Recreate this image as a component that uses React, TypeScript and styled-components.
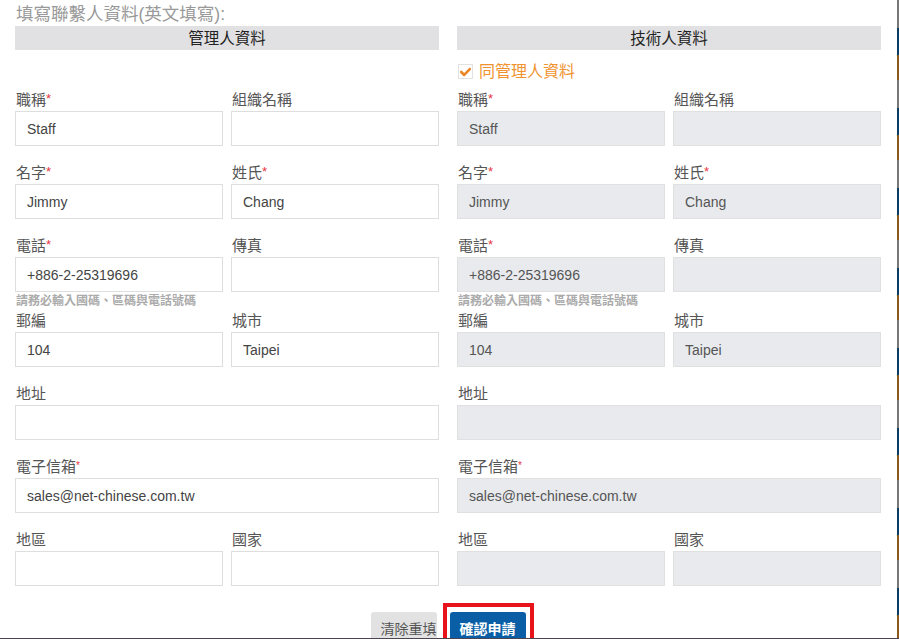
import styled, { createGlobalStyle } from "styled-components";

const GlobalStyle = createGlobalStyle`
    html, body {
        margin: 0;
        padding: 0;
        width: 899px;
        height: 639px;
        overflow: hidden;
        background: #4a4550;
    }
    * { box-sizing: border-box; }
`

type Field = {
    label: string;
    required?: boolean;
    smallStar?: boolean;
    value?: string;
    hint?: string;
}

const rows: Field[][] = [
    [{ label: "職稱", required: true, value: "Staff" }, { label: "組織名稱" }],
    [{ label: "名字", required: true, value: "Jimmy" }, { label: "姓氏", required: true, value: "Chang" }],
    [{ label: "電話", required: true, value: "+886-2-25319696", hint: "請務必輸入國碼、區碼與電話號碼" }, { label: "傳真" }],
    [{ label: "郵編", value: "104" }, { label: "城市", value: "Taipei" }],
    [{ label: "地址" }],
    [{ label: "電子信箱", smallStar: true, value: "sales@net-chinese.com.tw" }],
    [{ label: "地區" }, { label: "國家" }],
]

const ContactColumn = ({ title, disabled }: { title: string; disabled?: boolean }) => {
    return (
        <Column>
            <SectionHeader>{title}</SectionHeader>
            <CheckRow>
                {disabled && (
                    <>
                        <CheckBox>
                            <svg width="14" height="14" viewBox="0 0 14 14">
                                <path d="M2.4 7 L5.6 10.2 L11.6 3.8" fill="none" stroke="#ec8526" strokeWidth="2.8" strokeLinecap="round" strokeLinejoin="round" />
                            </svg>
                        </CheckBox>
                        <CheckText>同管理人資料</CheckText>
                    </>
                )}
            </CheckRow>
            {rows.map((row, i) => (
                <FieldRow key={i} $wide={row.length === 1}>
                    {row.map((f) => (
                        <FieldGroup key={f.label} $hasHint={!!f.hint}>
                            <Label>
                                {f.label}
                                {(f.required || f.smallStar) && <Star $small={f.smallStar}>*</Star>}
                            </Label>
                            <Input readOnly disabled={disabled} value={f.value ?? ""} />
                            {f.hint && <Hint>{f.hint}</Hint>}
                        </FieldGroup>
                    ))}
                </FieldRow>
            ))}
        </Column>
    )
}

const App = () => {
    return (
        <>
            <GlobalStyle />
            <Screen>
                <Modal>
                    <Title>填寫聯繫人資料(英文填寫):</Title>
                    <Columns>
                        <ContactColumn title="管理人資料" />
                        <ContactColumn title="技術人資料" disabled />
                    </Columns>
                    <ButtonRow>
                        <ResetButton>清除重填</ResetButton>
                        <SubmitWrap>
                            <SubmitButton>確認申請</SubmitButton>
                            <Highlight />
                        </SubmitWrap>
                    </ButtonRow>
                </Modal>
                <SideStrip />
            </Screen>
        </>
    )
}

export default App;

const Screen = styled.div`
    display: flex;
    width: 899px;
    height: 639px;
    font-family: "Liberation Sans", Arial, "Noto Sans CJK TC", sans-serif;
`

const Modal = styled.div`
    width: 897px;
    height: 638px;
    background: #fff;
    padding: 0 16px 0 15px;
    overflow: hidden;
`

const SideStrip = styled.div`
    width: 2px;
    height: 638px;
    background: repeating-linear-gradient(
        to bottom,
        #777 0px, #777 28px,
        #0a3d66 28px, #0a3d66 55px,
        #8a5a1c 55px, #8a5a1c 80px
    );
`

const Title = styled.div`
    height: 26px;
    line-height: 28px;
    font-size: 17.5px;
    color: #999;
    padding-left: 1px;
`

const Columns = styled.div`
    display: grid;
    grid-template-columns: 424px 424px;
    column-gap: 18px;
`

const Column = styled.div`
    display: flex;
    flex-direction: column;
`

const SectionHeader = styled.div`
    height: 24px;
    line-height: 25px;
    background: #e1e1e3;
    text-align: center;
    font-size: 15.5px;
    color: #222;
`

const CheckRow = styled.div`
    height: 40px;
    display: flex;
    align-items: center;
    padding: 0 0 0 1px;
`

const CheckBox = styled.span`
    display: inline-flex;
    width: 15px;
    height: 15px;
    border: 1px solid #e2e2e2;
    align-items: center;
    justify-content: center;
    margin-right: 6px;
    margin-top: 3px;
`

const CheckText = styled.span`
    font-size: 16px;
    color: #f0922e;
`

const FieldRow = styled.div<{ $wide?: boolean }>`
    display: grid;
    grid-template-columns: ${(p) => (p.$wide ? "1fr" : "208px 208px")};
    column-gap: 8px;
`

const FieldGroup = styled.div<{ $hasHint?: boolean }>`
    display: flex;
    flex-direction: column;
    margin-bottom: ${(p) => (p.$hasHint ? "0" : "17px")};
`

const Label = styled.label`
    height: 21px;
    line-height: 20px;
    font-size: 15px;
    color: #555;
    padding-left: 1px;
`

const Star = styled.span<{ $small?: boolean }>`
    color: #e8343c;
    font-size: ${(p) => (p.$small ? "10px" : "13px")};
    vertical-align: top;
    line-height: ${(p) => (p.$small ? "17px" : "18px")};
`

const Input = styled.input`
    height: 35px;
    width: 100%;
    border: 1px solid #dedede;
    padding: 0 11px;
    font-size: 14px;
    font-family: "Liberation Sans", Arial, sans-serif;
    color: #444;
    background: #fff;
    outline: none;

    &:disabled {
        background: #e8eaed;
        color: #555;
        border-color: #e0e0e0;
    }
`

const Hint = styled.div`
    height: 19px;
    line-height: 19px;
    font-size: 12px;
    font-weight: bold;
    color: #ababab;
    padding-left: 1px;
`

const ButtonRow = styled.div`
    display: flex;
    justify-content: center;
    gap: 13px;
    padding-top: 9px;
`

const ResetButton = styled.button`
    width: 66px;
    height: 32px;
    border: none;
    border-radius: 3px;
    background: #e2e2e2;
    color: #555;
    font-size: 14px;
    font-family: "Liberation Sans", Arial, "Noto Sans CJK TC", sans-serif;
    text-align: left;
    padding: 0 0 0 10px;
`

const SubmitWrap = styled.div`
    position: relative;
`

const SubmitButton = styled.button`
    width: 76px;
    height: 32px;
    border: none;
    border-radius: 3px;
    background: #0a5ea6;
    color: #fff;
    font-weight: bold;
    font-size: 14px;
    font-family: "Liberation Sans", Arial, "Noto Sans CJK TC", sans-serif;
    padding: 0;
`

const Highlight = styled.span`
    position: absolute;
    left: -7px;
    right: -8px;
    top: -9px;
    bottom: -10px;
    border: 4px solid #e8141c;
    pointer-events: none;
`
